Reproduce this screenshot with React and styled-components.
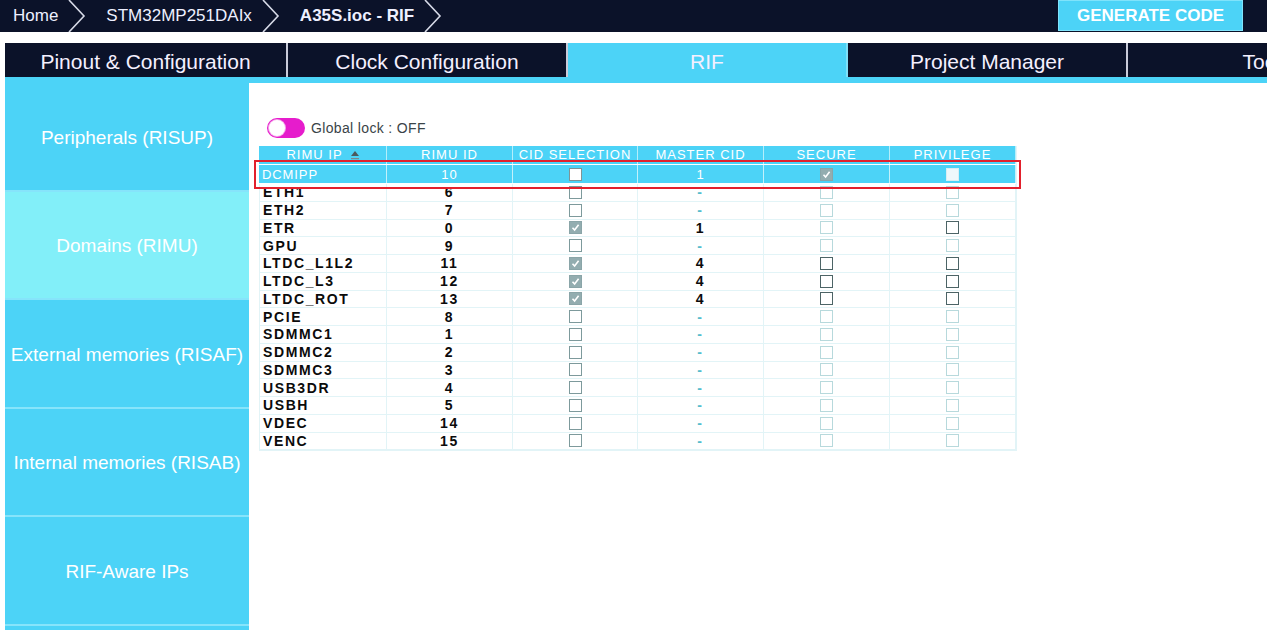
import React from "react";
import styled, { createGlobalStyle, css } from "styled-components";

const GlobalStyle = createGlobalStyle`
  html, body { margin: 0; padding: 0; background: #ffffff; }
  body { width: 1267px; height: 630px; overflow: hidden; font-family: "Liberation Sans", Arial, sans-serif; }
  #root { width: 1267px; height: 630px; }
`;

const NAVY = "#0b1229";
const CYAN = "#4cd3f7";

const Page = styled.div`
  width: 1267px;
  height: 630px;
  display: flex;
  flex-direction: column;
  overflow: hidden;
`;

const TopBar = styled.div`
  height: 32px;
  background: ${NAVY};
  display: flex;
  align-items: stretch;
  padding-left: 13px;
  flex-shrink: 0;
`;

const Crumb = styled.div`
  display: flex;
  align-items: center;
  color: #eef0ff;
  font-size: 17px;
  font-weight: ${(p) => (p.$bold ? 700 : 400)};
  white-space: nowrap;
`;

const Chevron = styled.svg`
  width: 18px;
  height: 32px;
  margin: 0 20px 0 10px;
  flex-shrink: 0;
`;

const GenerateButton = styled.button`
  margin-left: auto;
  margin-right: 24px;
  width: 185px;
  height: 31px;
  background: ${CYAN};
  border: 1px solid #7fe3fb;
  color: #ffffff;
  font-family: "Liberation Sans", Arial, sans-serif;
  font-weight: 700;
  font-size: 17px;
  padding: 0;
`;

const Lower = styled.div`
  margin-top: 11px;
  margin-left: 5px;
  flex: 1;
  display: flex;
  flex-direction: column;
  min-height: 0;
`;

const TabBar = styled.div`
  display: flex;
  height: 34px;
  flex-shrink: 0;
  overflow: hidden;
  border-bottom: 6px solid ${CYAN};
`;

const Tab = styled.div`
  flex: 0 0 ${(p) => p.$w}px;
  height: 34px;
  box-sizing: border-box;
  padding-top: 3px;
  display: flex;
  align-items: center;
  justify-content: center;
  font-size: 21px;
  white-space: nowrap;
  color: #f4f0ff;
  background: ${(p) => (p.$active ? CYAN : NAVY)};
  border-right: 2px solid ${(p) => (p.$active ? "#7fe0f8" : "#c9cbd9")};
`;

const Body = styled.div`
  flex: 1;
  display: flex;
  min-height: 0;
`;

const Sidebar = styled.div`
  width: 244px;
  flex-shrink: 0;
  display: flex;
  flex-direction: column;
  background: ${CYAN};
`;

const SideItem = styled.div`
  height: 108.5px;
  flex-shrink: 0;
  border-bottom: 2px solid #86e4fb;
  display: flex;
  align-items: center;
  justify-content: center;
  padding-top: 3px;
  box-sizing: border-box;
  color: #ffffff;
  font-size: 19px;
  white-space: nowrap;
  background: ${(p) => (p.$active ? "#82eff9" : CYAN)};
`;

const Main = styled.div`
  flex: 1;
  padding: 35px 0 0 10px;
`;

const LockRow = styled.div`
  display: flex;
  align-items: center;
  gap: 6px;
  margin-left: 8px;
  height: 20px;
`;

const Toggle = styled.div`
  width: 38px;
  height: 20px;
  border-radius: 10px;
  background: #e61ccc;
  position: relative;
`;

const Knob = styled.div`
  position: absolute;
  left: 2px;
  top: 2px;
  width: 16px;
  height: 16px;
  border-radius: 50%;
  background: #ffffff;
  box-shadow: 0 0 0 1px #f3a6e9;
`;

const LockLabel = styled.span`
  font-size: 14px;
  color: #3a4448;
  letter-spacing: 0.35px;
`;

const Table = styled.div`
  margin-top: 8px;
  width: 757px;
  border-right: 1px solid #e2f4f7;
  border-bottom: 1px solid #e2f4f7;
`;

const COLS = "128px 126px 125px 126px 126px 126px";

const HeaderRow = styled.div`
  display: grid;
  grid-template-columns: ${COLS};
  height: 18px;
  background: ${CYAN};
`;

const HeadCell = styled.div`
  color: #ffffff;
  font-size: 13px;
  letter-spacing: 1px;
  line-height: 18px;
  text-align: center;
  white-space: nowrap;
  border-right: 1px solid #b4eefb;
  display: flex;
  align-items: center;
  justify-content: center;
  gap: 8px;
`;

const SortIcon = styled.svg`
  width: 8px;
  height: 9px;
`;

const Row = styled.div`
  display: grid;
  grid-template-columns: ${COLS};
  height: 16.75px;
  border-bottom: 1px solid #e2f4f7;
  ${(p) =>
    p.$selected &&
    css`
      margin-top: 1px;
      height: 18px;
      background: ${CYAN};
      outline: 2px solid #e2202c;
      outline-offset: 3px;
      border-bottom: 1px solid #ffffff;
    `}
`;

const Cell = styled.div`
  display: flex;
  align-items: center;
  justify-content: ${(p) => (p.$left ? "flex-start" : "center")};
  padding-left: ${(p) => (p.$left ? "3px" : "0")};
  font-size: ${(p) => (p.$sel ? "13px" : "14px")};
  letter-spacing: ${(p) => (p.$sel ? "0.9px" : "1.6px")};
  white-space: nowrap;
  font-weight: ${(p) => (p.$sel ? 400 : 700)};
  color: ${(p) => (p.$sel ? "#ffffff" : p.$dash ? "#55bccd" : "#0b0b0b")};
  border-right: 1px solid ${(p) => (p.$sel ? "#c3f1fb" : "#e2f4f7")};
  border-left: ${(p) => (p.$first ? "1px solid #e2f4f7" : "none")};
`;

const boxVariants = {
  box: css`
    border: 1.5px solid #7d9a9c;
    background: #ffffff;
  `,
  faded: css`
    border: 1.5px solid #b7d9dc;
    background: #ffffff;
  `,
  dark: css`
    border: 1.6px solid #4c6466;
    background: #ffffff;
  `,
  checked: css`
    border: 1.5px solid #8aa5a8;
    background: #93adb0;
  `,
  onsel: css`
    border: 1.5px solid #7f9496;
    background: #ffffff;
  `,
  light: css`
    border: 1.5px solid #d8eef3;
    background: #eef8fb;
  `,
};

const Box = styled.span`
  width: 13px;
  height: 13px;
  box-sizing: border-box;
  display: inline-flex;
  align-items: center;
  justify-content: center;
  ${(p) => boxVariants[p.$v]}
`;

function Check({ v }) {
  return (
    <Box $v={v}>
      {v === "checked" && (
        <svg width="9" height="9" viewBox="0 0 9 9">
          <polyline points="1.5,4.8 3.6,7 7.6,1.8" fill="none" stroke="#ffffff" strokeWidth="1.6" />
        </svg>
      )}
    </Box>
  );
}

const rows = [
  ["ETH1", "6", "box", "-", "faded", "faded"],
  ["ETH2", "7", "box", "-", "faded", "faded"],
  ["ETR", "0", "checked", "1", "faded", "dark"],
  ["GPU", "9", "box", "-", "faded", "faded"],
  ["LTDC_L1L2", "11", "checked", "4", "dark", "dark"],
  ["LTDC_L3", "12", "checked", "4", "dark", "dark"],
  ["LTDC_ROT", "13", "checked", "4", "dark", "dark"],
  ["PCIE", "8", "box", "-", "faded", "faded"],
  ["SDMMC1", "1", "box", "-", "faded", "faded"],
  ["SDMMC2", "2", "box", "-", "faded", "faded"],
  ["SDMMC3", "3", "box", "-", "faded", "faded"],
  ["USB3DR", "4", "box", "-", "faded", "faded"],
  ["USBH", "5", "box", "-", "faded", "faded"],
  ["VDEC", "14", "box", "-", "faded", "faded"],
  ["VENC", "15", "box", "-", "faded", "faded"],
];

function ChevronIcon() {
  return (
    <Chevron viewBox="0 0 18 32">
      <polyline points="1,0 16,16 1,32" fill="none" stroke="#d8dbe8" strokeWidth="1.6" />
    </Chevron>
  );
}

const tabs = [
  ["Pinout & Configuration", 283],
  ["Clock Configuration", 280],
  ["RIF", 280, true],
  ["Project Manager", 280],
  ["Tools", 280],
];

const sideItems = [
  ["Peripherals (RISUP)"],
  ["Domains (RIMU)", true],
  ["External memories (RISAF)"],
  ["Internal memories (RISAB)"],
  ["RIF-Aware IPs"],
  [""],
];

export default function App() {
  return (
    <Page>
      <GlobalStyle />
      <TopBar>
        <Crumb>Home</Crumb>
        <ChevronIcon />
        <Crumb>STM32MP251DAIx</Crumb>
        <ChevronIcon />
        <Crumb $bold>A35S.ioc - RIF</Crumb>
        <ChevronIcon />
        <GenerateButton>GENERATE CODE</GenerateButton>
      </TopBar>
      <Lower>
        <TabBar>
          {tabs.map(([t, w, a]) => (
            <Tab key={t} $w={w} $active={a}>
              {t}
            </Tab>
          ))}
        </TabBar>
        <Body>
          <Sidebar>
            {sideItems.map(([t, a], i) => (
              <SideItem key={i} $active={a}>
                {t}
              </SideItem>
            ))}
          </Sidebar>
          <Main>
            <LockRow>
              <Toggle>
                <Knob />
              </Toggle>
              <LockLabel>Global lock : OFF</LockLabel>
            </LockRow>
            <Table>
              <HeaderRow>
                <HeadCell>
                  RIMU IP
                  <SortIcon viewBox="0 0 8 9">
                    <polygon points="4,0 8,5 0,5" fill="#4b5a5e" />
                    <rect x="0" y="7" width="8" height="1.2" fill="#7a8a8e" />
                  </SortIcon>
                </HeadCell>
                <HeadCell>RIMU ID</HeadCell>
                <HeadCell>CID SELECTION</HeadCell>
                <HeadCell>MASTER CID</HeadCell>
                <HeadCell>SECURE</HeadCell>
                <HeadCell>PRIVILEGE</HeadCell>
              </HeaderRow>
              <Row $selected>
                <Cell $left $sel>DCMIPP</Cell>
                <Cell $sel>10</Cell>
                <Cell $sel><Check v="onsel" /></Cell>
                <Cell $sel>1</Cell>
                <Cell $sel><Check v="checked" /></Cell>
                <Cell $sel><Check v="light" /></Cell>
              </Row>
              {rows.map(([name, id, cid, master, sec, priv]) => (
                <Row key={name}>
                  <Cell $left $first>{name}</Cell>
                  <Cell>{id}</Cell>
                  <Cell><Check v={cid} /></Cell>
                  <Cell $dash={master === "-"}>{master}</Cell>
                  <Cell><Check v={sec} /></Cell>
                  <Cell><Check v={priv} /></Cell>
                </Row>
              ))}
            </Table>
          </Main>
        </Body>
      </Lower>
    </Page>
  );
}
